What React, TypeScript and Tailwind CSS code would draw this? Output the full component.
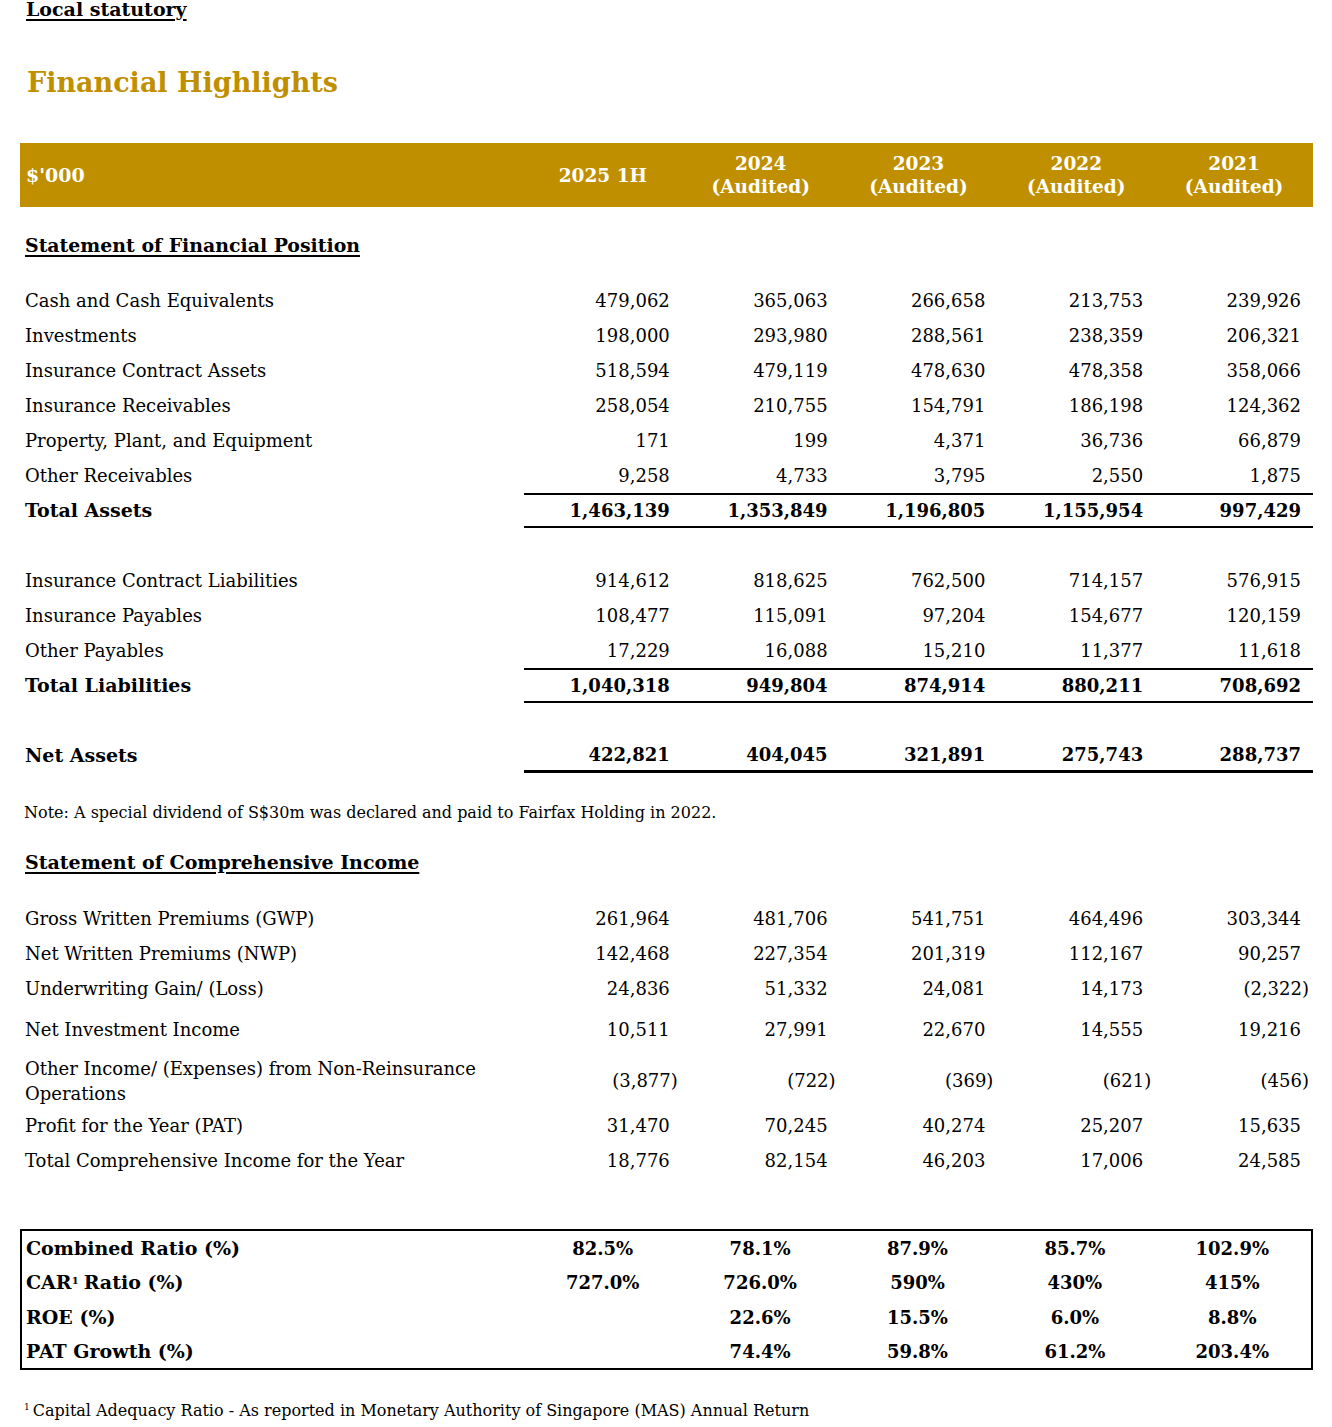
import React from 'react';

type Row = {
  label: React.ReactNode;
  values: string[];
  bold?: boolean;
  total?: boolean;
  net?: boolean;
  h?: string;
};

const years = [
  { top: '2025 1H', sub: '' },
  { top: '2024', sub: '(Audited)' },
  { top: '2023', sub: '(Audited)' },
  { top: '2022', sub: '(Audited)' },
  { top: '2021', sub: '(Audited)' },
];

const assets: Row[] = [
  { label: 'Cash and Cash Equivalents', values: ['479,062', '365,063', '266,658', '213,753', '239,926'] },
  { label: 'Investments', values: ['198,000', '293,980', '288,561', '238,359', '206,321'] },
  { label: 'Insurance Contract Assets', values: ['518,594', '479,119', '478,630', '478,358', '358,066'] },
  { label: 'Insurance Receivables', values: ['258,054', '210,755', '154,791', '186,198', '124,362'] },
  { label: 'Property, Plant, and Equipment', values: ['171', '199', '4,371', '36,736', '66,879'] },
  { label: 'Other Receivables', values: ['9,258', '4,733', '3,795', '2,550', '1,875'] },
  { label: 'Total Assets', values: ['1,463,139', '1,353,849', '1,196,805', '1,155,954', '997,429'], bold: true, total: true },
];

const liabilities: Row[] = [
  { label: 'Insurance Contract Liabilities', values: ['914,612', '818,625', '762,500', '714,157', '576,915'] },
  { label: 'Insurance Payables', values: ['108,477', '115,091', '97,204', '154,677', '120,159'] },
  { label: 'Other Payables', values: ['17,229', '16,088', '15,210', '11,377', '11,618'] },
  { label: 'Total Liabilities', values: ['1,040,318', '949,804', '874,914', '880,211', '708,692'], bold: true, total: true },
];

const income: Row[] = [
  { label: 'Gross Written Premiums (GWP)', values: ['261,964', '481,706', '541,751', '464,496', '303,344'] },
  { label: 'Net Written Premiums (NWP)', values: ['142,468', '227,354', '201,319', '112,167', '90,257'] },
  { label: 'Underwriting Gain/ (Loss)', values: ['24,836', '51,332', '24,081', '14,173', '(2,322)'] },
  { label: 'Net Investment Income', values: ['10,511', '27,991', '22,670', '14,555', '19,216'], h: 'h-[47px]' },
  {
    label: (
      <span className="leading-[25px]">
        Other Income/ (Expenses) from Non-Reinsurance
        <br />
        Operations
      </span>
    ),
    values: ['(3,877)', '(722)', '(369)', '(621)', '(456)'],
    h: 'h-[55px]',
  },
  { label: 'Profit for the Year (PAT)', values: ['31,470', '70,245', '40,274', '25,207', '15,635'] },
  { label: 'Total Comprehensive Income for the Year', values: ['18,776', '82,154', '46,203', '17,006', '24,585'] },
];

const ratios: { label: React.ReactNode; values: string[]; h: string }[] = [
  { label: 'Combined Ratio (%)', values: ['82.5%', '78.1%', '87.9%', '85.7%', '102.9%'], h: 'h-[34px]' },
  {
    label: (
      <>
        CAR<sup className="text-[10px] relative -top-[2px] mr-[5px]">1</sup>Ratio (%)
      </>
    ),
    values: ['727.0%', '726.0%', '590%', '430%', '415%'],
    h: 'h-[35px]',
  },
  { label: 'ROE (%)', values: ['', '22.6%', '15.5%', '6.0%', '8.8%'], h: 'h-[34px]' },
  { label: 'PAT Growth (%)', values: ['', '74.4%', '59.8%', '61.2%', '203.4%'], h: 'h-[34px]' },
];

function DataRow({ row }: { row: Row }) {
  return (
    <div className={`grid grid-cols-[504px_repeat(5,minmax(0,1fr))] ${row.h ?? 'h-[35px]'}`}>
      <div className={`flex items-center pl-[5px] ${row.bold ? 'font-bold text-[19px]' : ''}`}>{row.label}</div>
      {row.values.map((v, i) => (
        <div
          key={i}
          className={`flex items-center justify-end ${v.startsWith('(') ? 'pr-[4px]' : 'pr-[12px]'} ${
            row.bold ? 'font-bold' : ''
          } ${row.total ? 'border-t-2 border-b-2 border-black' : ''} ${row.net ? 'border-b-[3px] border-black' : ''}`}
        >
          {v}
        </div>
      ))}
    </div>
  );
}

export default function App() {
  return (
    <div className="min-h-screen bg-white text-black font-['DejaVu_Serif',serif] text-[18px]">
      <div className="w-[1293px] ml-[20px]">
        <div className="h-[18px] leading-[18px] pl-[6px] text-[19px] font-bold underline decoration-2 underline-offset-[3px]">
          Local statutory
        </div>

        <h1 className="mt-[47px] h-[36px] leading-[36px] pl-[7px] text-[27px] font-bold text-[#bf8f00]">
          Financial Highlights
        </h1>

        {/* Header bar */}
        <div className="mt-[42px] h-[64px] bg-[#bf8f00] text-white font-bold text-[18.5px] grid grid-cols-[504px_repeat(5,minmax(0,1fr))]">
          <div className="flex items-center pl-[6px] text-[19px]">$'000</div>
          {years.map((y) => (
            <div key={y.top} className="flex flex-col items-center justify-center leading-[23px]">
              <span>{y.top}</span>
              {y.sub && <span>{y.sub}</span>}
            </div>
          ))}
        </div>

        {/* Statement of Financial Position */}
        <div className="h-[35px] mt-[21px] flex items-center pl-[5px] text-[18.9px] font-bold underline decoration-[1.5px] underline-offset-[3px]">
          Statement of Financial Position
        </div>
        <div className="mt-[20px]">
          {assets.map((r, i) => (
            <DataRow key={i} row={r} />
          ))}
          <div className="h-[35px]" />
          {liabilities.map((r, i) => (
            <DataRow key={i} row={r} />
          ))}
          <div className="h-[35px]" />
          <DataRow
            row={{
              label: 'Net Assets',
              values: ['422,821', '404,045', '321,891', '275,743', '288,737'],
              bold: true,
              net: true,
            }}
          />
        </div>

        <div className="mt-[22px] h-[35px] flex items-center pl-[4px] text-[16px]">
          Note: A special dividend of S$30m was declared and paid to Fairfax Holding in 2022.
        </div>

        {/* Statement of Comprehensive Income */}
        <div className="h-[35px] mt-[15px] flex items-center pl-[5px] text-[19px] font-bold underline decoration-[1.5px] underline-offset-[3px]">
          Statement of Comprehensive Income
        </div>
        <div className="mt-[21px]">
          {income.map((r, i) => (
            <DataRow key={i} row={r} />
          ))}
        </div>

        {/* Ratios */}
        <div className="mt-[51px] border-2 border-black font-bold">
          {ratios.map((r, i) => (
            <div key={i} className={`grid grid-cols-[502px_repeat(5,minmax(0,1fr))] ${r.h}`}>
              <div className="flex items-center pl-[4px] text-[19px]">{r.label}</div>
              {r.values.map((v, j) => (
                <div key={j} className="flex items-center justify-center">
                  {v}
                </div>
              ))}
            </div>
          ))}
        </div>

        <div className="mt-[29px] h-[24px] flex items-center pl-[4px] text-[16px]">
          <sup className="text-[9px] mr-[3px]">1</sup>
          Capital Adequacy Ratio - As reported in Monetary Authority of Singapore (MAS) Annual Return
        </div>
      </div>
    </div>
  );
}
